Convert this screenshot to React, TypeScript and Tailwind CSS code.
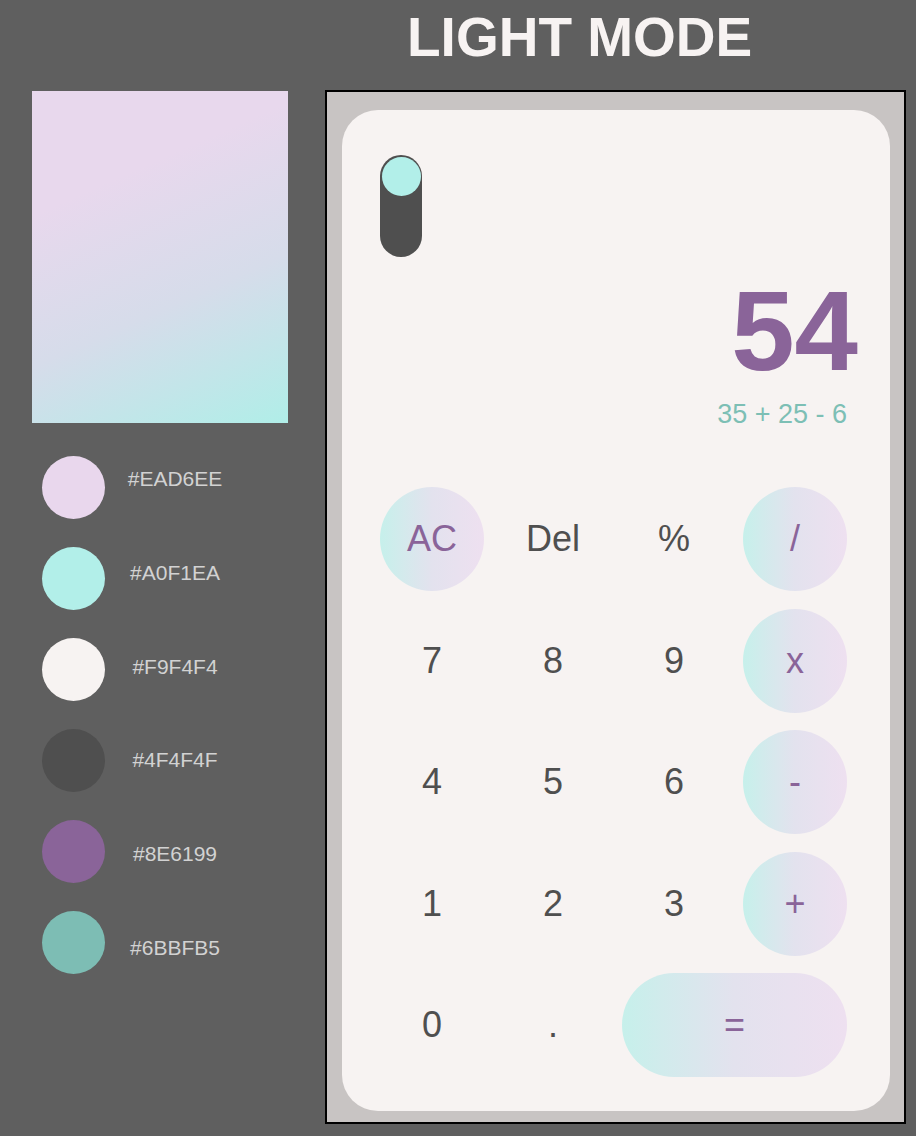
const swatches = [
  { color: "bg-[#e9d7ed]", label: "#EAD6EE" },
  { color: "bg-[#b2efe9]", label: "#A0F1EA" },
  { color: "bg-[#f7f3f2]", label: "#F9F4F4" },
  { color: "bg-[#4f4f4f]", label: "#4F4F4F" },
  { color: "bg-[#8a6499]", label: "#8E6199" },
  { color: "bg-[#7dbdb4]", label: "#6BBFB5" },
];

type Key = { label: string; op?: boolean; wide?: boolean };

const keys: Key[] = [
  { label: "AC", op: true },
  { label: "Del" },
  { label: "%" },
  { label: "/", op: true },
  { label: "7" },
  { label: "8" },
  { label: "9" },
  { label: "x", op: true },
  { label: "4" },
  { label: "5" },
  { label: "6" },
  { label: "-", op: true },
  { label: "1" },
  { label: "2" },
  { label: "3" },
  { label: "+", op: true },
  { label: "0" },
  { label: "." },
  { label: "=", op: true, wide: true },
];

function CalcKey({ k }: { k: Key }) {
  return (
    <button
      className={`h-[104px] rounded-full flex items-center justify-center text-[36px] leading-none ${
        k.wide ? "col-span-2" : ""
      } ${
        k.op
          ? "bg-gradient-to-r from-[#c6f0eb] via-[#e3e2ee] to-[#eee0f0] text-[#8a6499]"
          : "text-[#4f4f4f]"
      }`}
    >
      {k.label}
    </button>
  );
}

export default function App() {
  return (
    <div className="w-[916px] h-[1136px] bg-[#5f5f5f] font-['Liberation_Sans',Arial,sans-serif] overflow-hidden">
      {/* Title */}
      <h1 className="pt-[10px] pl-[407px] text-[55px] leading-[55px] font-bold text-[#f7f3f2]">
        LIGHT MODE
      </h1>

      <div className="mt-[25px] flex">
        {/* Palette */}
        <div className="w-[325px] pl-[32px] pt-[1px]">
          <div className="w-[256px] h-[332px] bg-[linear-gradient(156deg,#e8d8ed_28%,#d6dcea_62%,#b0eee8_100%)]" />
          <div className="mt-[33px] flex">
            <div className="ml-[10px] flex flex-col gap-[28px]">
              {swatches.map((s) => (
                <div key={s.label} className={`w-[63px] h-[63px] rounded-full ${s.color}`} />
              ))}
            </div>
            <div className="ml-[15px] pt-[11px] flex flex-col gap-[69.8px]">
              {swatches.map((s) => (
                <span
                  key={s.label}
                  className="w-[110px] text-center text-[21px] leading-[24px] text-[#d2d2d2]"
                >
                  {s.label}
                </span>
              ))}
            </div>
          </div>
        </div>

        {/* Phone */}
        <div className="w-[581px] h-[1034px] border-2 border-black bg-[#c8c4c3] pl-[15px] pt-[18px] pr-[14px] pb-[11px] flex">
          <div className="flex-1 rounded-[36px] bg-[#f7f3f2] pl-[38px] pr-[43px] pt-[45px] flex flex-col">
            {/* Toggle */}
            <div className="w-[42px] h-[102px] rounded-full bg-[#4f4f4f] flex flex-col items-center pt-[2px]">
              <div className="w-[39px] h-[39px] rounded-full bg-[#b2efe9]" />
            </div>

            {/* Display */}
            <div className="mt-[17px] text-right text-[114px] leading-none font-bold text-[#8a6499] -mr-[11px]">
              54
            </div>
            <div className="mt-[13px] text-right text-[27px] leading-none text-[#7dbfb5]">
              35 + 25 - 6
            </div>

            {/* Keys */}
            <div className="mt-[59px] grid grid-cols-4 gap-x-[17px] gap-y-[17.5px]">
              {keys.map((k) => (
                <CalcKey key={k.label} k={k} />
              ))}
            </div>
          </div>
        </div>
      </div>
    </div>
  );
}
